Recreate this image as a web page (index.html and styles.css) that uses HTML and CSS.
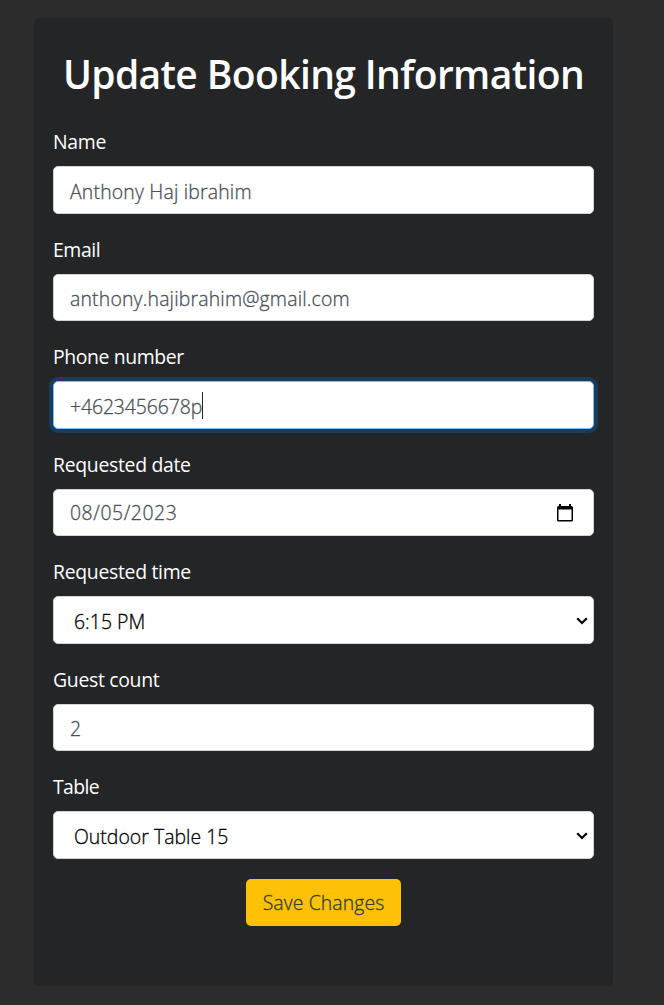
FILE: index.html
```html
<!DOCTYPE html>
<html lang="en">
<head>
<meta charset="utf-8">
<title>Update Booking Information</title>
<link rel="stylesheet" href="styles.css">
</head>
<body>
<main class="card">
  <h1 class="title"><span>Update Booking Information</span></h1>
  <div class="group">
    <div class="label"><span class="t-name">Name</span></div>
    <div class="control"><span class="v-name">Anthony Haj ibrahim</span></div>
  </div>
  <div class="group">
    <div class="label"><span class="t-email">Email</span></div>
    <div class="control"><span class="v-email">anthony.hajibrahim@gmail.com</span></div>
  </div>
  <div class="group">
    <div class="label"><span class="t-phone">Phone number</span></div>
    <div class="control focused"><span class="v-phone">+4623456678p</span><i class="caret"></i></div>
  </div>
  <div class="group">
    <div class="label"><span class="t-date">Requested date</span></div>
    <div class="control date"><span class="v-date">08/05/2023</span>
      <svg class="calendar" width="18" height="20" viewBox="0 0 18 20"><path fill="#000" fill-rule="evenodd" d="M3 1h2v2h8V1h2v2h.5A1.5 1.5 0 0 1 17 4.500V17a1.500 1.500 0 0 1-1.500 1.500h-13A1.500 1.500 0 0 1 1 17V4.500A1.500 1.500 0 0 1 2.500 3H3zM2.500 6.500v10.500h13V6.500z"/></svg>
    </div>
  </div>
  <div class="group">
    <div class="label"><span class="t-time">Requested time</span></div>
    <div class="control select"><span class="v-time">6:15 PM</span>
      <svg class="chevron" width="12" height="8" viewBox="0 0 12 8"><path d="M1.200 1.300 6 6l4.800-4.700" fill="none" stroke="#000" stroke-width="2.200"/></svg>
    </div>
  </div>
  <div class="group">
    <div class="label"><span class="t-guest">Guest count</span></div>
    <div class="control"><span class="v-guest">2</span></div>
  </div>
  <div class="group">
    <div class="label"><span class="t-table">Table</span></div>
    <div class="control select"><span class="v-table">Outdoor Table 15</span>
      <svg class="chevron" width="12" height="8" viewBox="0 0 12 8"><path d="M1.200 1.300 6 6l4.800-4.700" fill="none" stroke="#000" stroke-width="2.200"/></svg>
    </div>
  </div>
  <button class="save"><span>Save Changes</span></button>
</main>
</body>
</html>
```
FILE: styles.css
```css
* { box-sizing: border-box; }
body {
  margin: 0;
  padding: 18px 51px 19px 34px;
  height: 1005px;
  overflow: hidden;
  background: #2c2c2c;
  font-family: "Open Sans", "Noto Sans", sans-serif;
  font-size: 19.4px;
  line-height: 30px;
  color: #fff;
}
.card {
  display: flex;
  flex-direction: column;
  height: 968px;
  padding: 32px 19px 0;
  border-radius: 5px;
  background: #242527;
}
.title {
  margin: 0 0 28.25px;
  font-size: 39px;
  font-weight: 600;
  line-height: 48px;
  text-align: center;
  white-space: nowrap;
  letter-spacing: -0.62px;
}
.group { margin-bottom: 20px; }
.label { height: 30px; margin-bottom: 10px; padding-top: 1px; }
.control {
  display: flex;
  align-items: center;
  height: 47.5px;
  padding: 3px 16px 0;
  border: 1px solid #ced4da;
  border-radius: 5px;
  background: #fff;
  color: #495057;
  font-weight: 300;
  white-space: nowrap;
}
.control span, .save span { -webkit-text-stroke: 0.3px currentColor; }
.focused { border-color: #80bdff; box-shadow: 0 0 0 4px #1b3b5d; }
.caret { width: 1px; height: 27px; margin-bottom: 3px; background: #222; }
.date, .select { justify-content: space-between; }
.date { padding: 1px 19px 0 16px; }
.select { padding: 3px 5px 0 20px; color: #000; }
.chevron { margin-bottom: 2px; }
.save {
  align-self: center;
  width: 155px;
  height: 47.5px;
  padding: 1px 0 0;
  border: 0;
  border-radius: 5px;
  background: #ffc107;
  color: #343a40;
  font: 300 19.4px/30px "Open Sans", "Noto Sans", sans-serif;
  letter-spacing: 0.1px;
  white-space: nowrap;
}
.label span { letter-spacing: -0.3px; }
.label .t-phone { letter-spacing: -0.38px; }
.label .t-email { letter-spacing: -0.4px; }
.label .t-table { letter-spacing: -0.6px; }
.v-name, .v-email { letter-spacing: 0.19px; }
.v-phone { letter-spacing: -0.1px; }
.v-date { letter-spacing: 0.55px; }
.v-time, .v-table { letter-spacing: 0.04px; }
```
